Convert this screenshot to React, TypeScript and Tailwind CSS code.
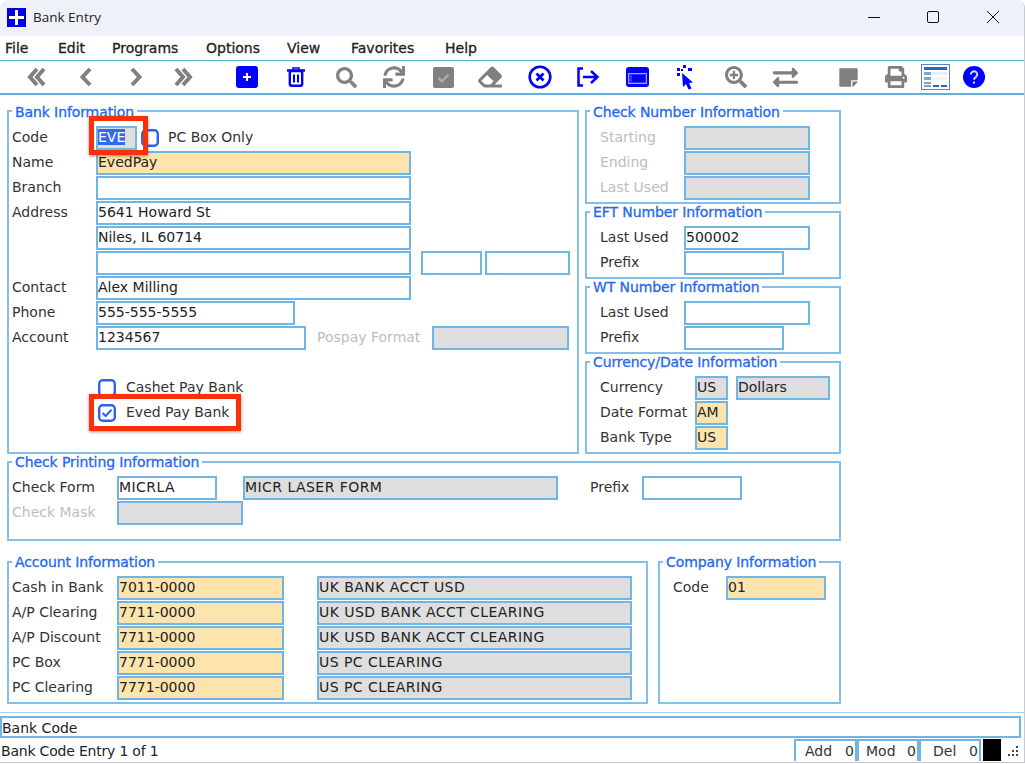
import React from "react";
import { FaSearch, FaSync, FaEraser, FaSearchPlus, FaExchangeAlt, FaStickyNote, FaPrint } from "react-icons/fa";

const BLUE = "#0000ff";
const GREY = "#808080";

const Double = ({ flip }: { flip?: boolean }) => (
  <svg width="19" height="20" viewBox="0 0 19 20" fill="none" stroke={GREY} strokeWidth="4" className={flip ? "-scale-x-100" : ""}>
    <path d="M10 2L3 10l7 8M17 2l-7 8 7 8" />
  </svg>
);
const Single = ({ flip }: { flip?: boolean }) => (
  <svg width="13" height="20" viewBox="0 0 13 20" fill="none" stroke={GREY} strokeWidth="4" className={flip ? "-scale-x-100" : ""}>
    <path d="M11 2L3.500 10l7.500 8" />
  </svg>
);
const PlusBox = () => (
  <svg width="22" height="22" viewBox="0 0 22 22">
    <rect width="22" height="22" rx="3" fill={BLUE} />
    <path d="M7 11h8M11 7v8" stroke="#fff" strokeWidth="2" />
  </svg>
);
const Trash = () => (
  <svg width="18" height="20" viewBox="0 0 18 20" fill="none">
    <path d="M0 3.500h18" stroke={BLUE} strokeWidth="2.500" />
    <path d="M6 3V1h6v2" stroke={BLUE} strokeWidth="1.500" />
    <rect x="2.800" y="4" width="12.400" height="14.800" rx="2" stroke={BLUE} strokeWidth="2.400" />
    <path d="M7 7.500v8M11 7.500v8" stroke={BLUE} strokeWidth="2" />
  </svg>
);
const CheckBox = () => (
  <svg width="21" height="21" viewBox="0 0 21 21">
    <rect width="21" height="21" rx="2" fill={GREY} />
    <path d="M5.500 11l3.500 3.500 6.500-7" stroke="#adadad" strokeWidth="2.200" fill="none" />
  </svg>
);
const TimesCircle = () => (
  <svg width="24" height="24" viewBox="0 0 24 24" fill="none" stroke={BLUE}>
    <circle cx="12" cy="12" r="10.300" strokeWidth="2.600" />
    <path d="M8.500 8.500l7 7M15.500 8.500l-7 7" strokeWidth="2.800" />
  </svg>
);
const ExitIcon = () => (
  <svg width="24" height="20" viewBox="0 0 24 20" fill="none" stroke={BLUE} strokeWidth="2.500">
    <path d="M7 1.500H2.500v17H7" />
    <path d="M7 10h14M15 4l6.500 6-6.500 6" />
  </svg>
);
const WindowIcon = () => (
  <svg width="23" height="20" viewBox="0 0 23 20">
    <rect width="23" height="20" rx="3" fill={BLUE} />
    <rect x="2" y="6" width="19" height="11" fill="#a0a0ff" />
    <rect x="3" y="7" width="17" height="9" fill="#3030ff" />
    <rect x="6" y="8" width="13" height="7" fill={BLUE} />
  </svg>
);
const PointerIcon = () => (
  <svg width="17" height="25" viewBox="0 0 17 25" fill={BLUE}>
    <path d="M5 8l11 9.500-4 .5 2.500 5.500-3 1-2.500-5.500L6 22z" />
    <rect x="0" y="3" width="3" height="3" />
    <rect x="6" y="0" width="3" height="3" />
    <rect x="11" y="3" width="4" height="3" />
    <rect x="0" y="8" width="3" height="3" />
    <rect x="4" y="4" width="2" height="2" />
  </svg>
);
const TableIcon = () => (
  <svg width="29" height="26" viewBox="0 0 29 26">
    <rect x=".5" y=".5" width="28" height="25" fill="#fff" stroke="#5b85b8" />
    <rect x="3" y="3" width="23" height="3" fill="#2f66ad" />
    <rect x="3" y="8" width="23" height="3" fill="#e6eef8" />
    <rect x="3" y="8" width="7" height="3" fill="#7fa3cf" />
    <rect x="3" y="13" width="23" height="3" fill="#eef4fa" />
    <rect x="3" y="13" width="7" height="3" fill="#7fa3cf" />
    <rect x="3" y="18" width="7" height="2" fill="#7fa3cf" />
    <rect x="3" y="21" width="7" height="2" fill="#7fa3cf" />
    <rect x="12" y="21" width="6" height="2" fill="#2f66ad" />
    <rect x="20" y="21" width="6" height="2" fill="#2f66ad" />
  </svg>
);
const Help = () => (
  <svg width="22" height="22" viewBox="0 0 22 22" fill="none">
    <circle cx="11" cy="11" r="11" fill={BLUE} />
    <path d="M7.800 8.500a3.200 3.200 0 1 1 5 2.700c-1.200.8-1.800 1.200-1.800 2.600" stroke="#d8d8ff" strokeWidth="2" />
    <rect x="10" y="15.500" width="2" height="2.200" fill="#d8d8ff" />
  </svg>
);

const tools: [React.ReactNode, string][] = [
  [<Double />, "ml-[20px]"],
  [<Single />, "ml-[17px]"],
  [<Single flip />, "ml-[19px]"],
  [<Double flip />, "ml-[15px]"],
  [<PlusBox />, "ml-[32px]"],
  [<Trash />, "ml-[17px]"],
  [<FaSearch size={21} color={GREY} />, "ml-[18px]"],
  [<FaSync size={22} color={GREY} />, "ml-[16px]"],
  [<CheckBox />, "ml-[17px]"],
  [<FaEraser size={24} color={GREY} />, "ml-[15px]"],
  [<TimesCircle />, "ml-[18px]"],
  [<ExitIcon />, "ml-[16px]"],
  [<WindowIcon />, "ml-[17px]"],
  [<PointerIcon />, "ml-[16px]"],
  [<FaSearchPlus size={22} color={GREY} />, "ml-[19px]"],
  [<FaExchangeAlt size={25} color={GREY} />, "ml-[17px]"],
  [<FaStickyNote size={21} color={GREY} />, "ml-[31px]"],
  [<FaPrint size={22} color={GREY} />, "ml-[16px]"],
  [<TableIcon />, "ml-[7px]"],
  [<Help />, "ml-[7px]"],
];

type Kind = "white" | "yellow" | "grey";
const kinds: Record<Kind, string> = { white: "bg-white", yellow: "bg-[#fde4ad]", grey: "bg-[#dedede]" };

function Field({ w, kind = "white", caps, children }: { w: string; kind?: Kind; caps?: boolean; children?: React.ReactNode }) {
  return (
    <div className={`${w} ${kinds[kind]} ${caps ? "tracking-[0.45px]" : ""} h-[24px] shrink-0 border-2 border-[#6fb6e6] leading-[18px] whitespace-nowrap overflow-hidden text-[#222]`}>
      {children}
    </div>
  );
}

function Row({ children }: { children: React.ReactNode }) {
  return <div className="flex items-center h-[25px]">{children}</div>;
}

function Label({ w, dim, children }: { w: string; dim?: boolean; children?: React.ReactNode }) {
  return <div className={`${w} shrink-0 whitespace-nowrap ${dim ? "text-[#bdbdbd]" : "text-[#333]"}`}>{children}</div>;
}

function Group({ title, box, tight, children }: { title: string; box: string; tight?: boolean; children: React.ReactNode }) {
  return (
    <fieldset className={`${box} shrink-0 border-2 border-[#82c0ea] pl-[3px]`}>
      <legend className={`${tight ? "leading-[16px]" : "leading-[18px]"} h-[16px] px-[3px] text-[#2468f2] tracking-[-0.1px] [-webkit-text-stroke:0.3px_#2468f2] whitespace-nowrap`}>{title}</legend>
      {children}
    </fieldset>
  );
}

function Check({ on }: { on?: boolean }) {
  return (
    <svg width="18" height="18" viewBox="0 0 18 18" className="shrink-0" fill="none">
      <rect x="1.200" y="1.200" width="15.600" height="15.600" rx="3.500" stroke="#2d63f0" strokeWidth="2.400" fill="#fff" />
      {on && <path d="M4.500 9l3.200 3 5.800-6.200" stroke="#2d63f0" strokeWidth="2.200" />}
    </svg>
  );
}

const menu: [string, string][] = [
  ["File", "w-[53px]"], ["Edit", "w-[54px]"], ["Programs", "w-[94px]"], ["Options", "w-[81px]"],
  ["View", "w-[64px]"], ["Favorites", "w-[94px]"], ["Help", "w-[50px]"],
];

const accounts = [
  ["Cash in Bank", "7011-0000", "UK BANK ACCT USD"],
  ["A/P Clearing", "7711-0000", "UK USD BANK ACCT CLEARING"],
  ["A/P Discount", "7711-0000", "UK USD BANK ACCT CLEARING"],
  ["PC Box", "7771-0000", "US PC CLEARING"],
  ["PC Clearing", "7771-0000", "US PC CLEARING"],
];

export default function App() {
  return (
    <div className="relative w-[1025px] h-[763px] overflow-hidden bg-white flex flex-col text-[14px] font-['DejaVu_Sans',sans-serif] border-r border-b border-[#c6c9cd] rounded-t-[8px]">
      {/* title bar */}
      <div className="h-[36px] shrink-0 bg-[#eef2f8] flex items-center pl-[7px] pb-[2px]">
        <svg width="19" height="19" viewBox="0 0 19 19">
          <rect width="19" height="19" fill="#0000e0" />
          <path d="M8 2h3v6h6v3h-6v6H8v-6H2V8h6z" fill="#fff" />
        </svg>
        <span className="ml-[7px] text-[13.500px] text-[#222] font-['Open_Sans',sans-serif]">Bank Entry</span>
        <div className="ml-auto mr-[2px] flex items-center text-[#111]">
          <svg width="60" height="16" viewBox="0 0 60 16" stroke="currentColor" fill="none"><path d="M24 8.500h12" /></svg>
          <svg width="59" height="16" viewBox="0 0 59 16" stroke="currentColor" fill="none"><rect x="23.500" y="2.500" width="11" height="11" rx="1.500" /></svg>
          <svg width="59" height="16" viewBox="0 0 59 16" stroke="currentColor" fill="none"><path d="M24 2l12 12M36 2L24 14" /></svg>
        </div>
      </div>
      {/* menu */}
      <div className="h-[24px] shrink-0 flex items-center pl-[5px] text-[#222] [-webkit-text-stroke:0.3px_#222]">
        {menu.map(([m, w]) => <div key={m} className={w}>{m}</div>)}
      </div>
      {/* toolbar */}
      <div className="h-[35px] shrink-0 border-t border-[#5fb0e2] border-b-2 flex items-center">
        {tools.map(([icon, ml], i) => (
          <div key={i} className={`${ml} w-[32px] h-[30px] shrink-0 flex items-center justify-center`}>{icon}</div>
        ))}
      </div>

      {/* form */}
      <div className="flex-1 min-h-0 pl-[7px] pt-[8px] flex flex-col">
        <div className="flex gap-[6px]">
          <Group title="Bank Information" box="w-[572px] h-[351px]">
            <div className="pt-[6px]">
              <Row>
                <Label w="w-[84px]">Code</Label>
                <Field w="w-[41px]" kind="grey"><span className="bg-[#2f6de8] text-white">EVE</span></Field>
                <div className="ml-[4px] w-[27px]"><Check /></div>
                <Label w="w-auto">PC Box Only</Label>
              </Row>
              <Row><Label w="w-[84px]">Name</Label><Field w="w-[315px]" kind="yellow">EvedPay</Field></Row>
              <Row><Label w="w-[84px]">Branch</Label><Field w="w-[315px]" /></Row>
              <Row><Label w="w-[84px]">Address</Label><Field w="w-[315px]">5641 Howard St</Field></Row>
              <Row><Label w="w-[84px]" /><Field w="w-[315px]">Niles, IL 60714</Field></Row>
              <Row>
                <Label w="w-[84px]" />
                <Field w="w-[315px]" />
                <div className="ml-[10px]"><Field w="w-[61px]" /></div>
                <div className="ml-[3px]"><Field w="w-[85px]" /></div>
              </Row>
              <Row><Label w="w-[84px]">Contact</Label><Field w="w-[315px]">Alex Milling</Field></Row>
              <Row><Label w="w-[84px]">Phone</Label><Field w="w-[199px]">555-555-5555</Field></Row>
              <Row>
                <Label w="w-[84px]">Account</Label>
                <Field w="w-[210px]">1234567</Field>
                <div className="ml-[11px]"><Label w="w-[115px]" dim>Pospay Format</Label></div>
                <Field w="w-[137px]" kind="grey" />
              </Row>
              <Row><span /></Row>
              <Row>
                <div className="ml-[86px] w-[28px]"><Check /></div>
                <Label w="w-auto">Cashet Pay Bank</Label>
              </Row>
              <Row>
                <div className="ml-[86px] w-[28px]"><Check on /></div>
                <Label w="w-auto">Eved Pay Bank</Label>
              </Row>
            </div>
          </Group>
          <div className="flex flex-col w-[256px]">
            <Group title="Check Number Information" box="w-[256px] h-[101px]">
              <div className="pt-[6px] pl-[10px]">
                <Row><Label w="w-[84px]" dim>Starting</Label><Field w="w-[126px]" kind="grey" /></Row>
                <Row><Label w="w-[84px]" dim>Ending</Label><Field w="w-[126px]" kind="grey" /></Row>
                <Row><Label w="w-[84px]" dim>Last Used</Label><Field w="w-[126px]" kind="grey" /></Row>
              </div>
            </Group>
            <Group tight title="EFT Number Information" box="w-[256px] h-[75px]">
              <div className="pt-[5px] pl-[10px]">
                <Row><Label w="w-[84px]">Last Used</Label><Field w="w-[126px]">500002</Field></Row>
                <Row><Label w="w-[84px]">Prefix</Label><Field w="w-[100px]" /></Row>
              </div>
            </Group>
            <Group tight title="WT Number Information" box="w-[256px] h-[75px]">
              <div className="pt-[5px] pl-[10px]">
                <Row><Label w="w-[84px]">Last Used</Label><Field w="w-[126px]" /></Row>
                <Row><Label w="w-[84px]">Prefix</Label><Field w="w-[100px]" /></Row>
              </div>
            </Group>
            <Group tight title="Currency/Date Information" box="w-[256px] h-[100px]">
              <div className="pt-[5px] pl-[10px]">
                <Row>
                  <Label w="w-[95px]">Currency</Label>
                  <Field w="w-[33px]" kind="grey">US</Field>
                  <div className="ml-[8px]"><Field w="w-[94px]" kind="grey">Dollars</Field></div>
                </Row>
                <Row><Label w="w-[95px]">Date Format</Label><Field w="w-[33px]" kind="yellow">AM</Field></Row>
                <Row><Label w="w-[95px]">Bank Type</Label><Field w="w-[33px]" kind="yellow">US</Field></Row>
              </div>
            </Group>
          </div>
        </div>

        <Group tight title="Check Printing Information" box="w-[834px] h-[87px]">
          <div className="pt-[5px]">
            <Row>
              <Label w="w-[105px]">Check Form</Label>
              <Field w="w-[100px]" caps>MICRLA</Field>
              <div className="ml-[26px]"><Field w="w-[315px]" kind="grey" caps>MICR LASER FORM</Field></div>
              <div className="ml-[32px]"><Label w="w-[52px]">Prefix</Label></div>
              <Field w="w-[100px]" />
            </Row>
            <Row><Label w="w-[105px]" dim>Check Mask</Label><Field w="w-[126px]" kind="grey" /></Row>
          </div>
        </Group>

        <div className="flex gap-[10px] mt-[13px]">
          <Group tight title="Account Information" box="w-[641px] h-[150px]">
            <div className="pt-[5px]">
              {accounts.map(([l, c, d]) => (
                <Row key={l}>
                  <Label w="w-[105px]">{l}</Label>
                  <Field w="w-[167px]" kind="yellow">{c}</Field>
                  <div className="ml-[33px]"><Field w="w-[315px]" kind="grey" caps>{d}</Field></div>
                </Row>
              ))}
            </div>
          </Group>
          <Group tight title="Company Information" box="w-[183px] h-[150px]">
            <div className="pt-[5px] pl-[10px]">
              <Row><Label w="w-[53px]">Code</Label><Field w="w-[100px]" kind="yellow">01</Field></Row>
            </div>
          </Group>
        </div>
      </div>

      {/* status */}
      <div className="h-[50px] shrink-0 border-t border-[#a8d2ee] pt-[3px]">
        <div className="w-[1021px] h-[22px] border-2 border-[#6fb6e6] leading-[21px] text-[#222]">Bank Code</div>
        <div className="flex h-[22px] mt-[1px] items-stretch">
          <div className="w-[794px] pl-[1px] leading-[24px] text-[#222] tracking-[-0.2px]">Bank Code Entry 1 of 1</div>
          {[["Add", "w-[63px]", "pl-[9px]"], ["Mod", "w-[62px]", "pl-[7px]"], ["Del", "w-[62px]", "pl-[12px]"]].map(([t, w, p]) => (
            <div key={t} className={`${w} ${p} border-2 border-[#6fb6e6] border-b-0 flex justify-between pr-[1px] leading-[20px] text-[#333]`}>
              <span>{t}</span><span>0</span>
            </div>
          ))}
          <div className="ml-[2px] w-[18px] bg-black" />
          <svg width="20" height="22" viewBox="0 0 20 22" className="ml-[1px]" fill="#444">
            <rect x="14" y="7" width="2" height="2" /><rect x="10" y="11" width="2" height="2" /><rect x="14" y="11" width="2" height="2" />
            <rect x="6" y="15" width="2" height="2" /><rect x="10" y="15" width="2" height="2" /><rect x="14" y="15" width="2" height="2" />
          </svg>
        </div>
      </div>

      {/* annotation boxes */}
      <div className="absolute left-[89px] top-[116px] w-[59px] h-[39px] border-[5px] border-[#fb3006] shadow-[0_1px_3px_rgba(0,0,0,0.4)]" />
      <div className="absolute left-[89px] top-[394px] w-[152px] h-[37px] border-[5px] border-[#fb3006] shadow-[0_1px_3px_rgba(0,0,0,0.4)]" />
    </div>
  );
}
